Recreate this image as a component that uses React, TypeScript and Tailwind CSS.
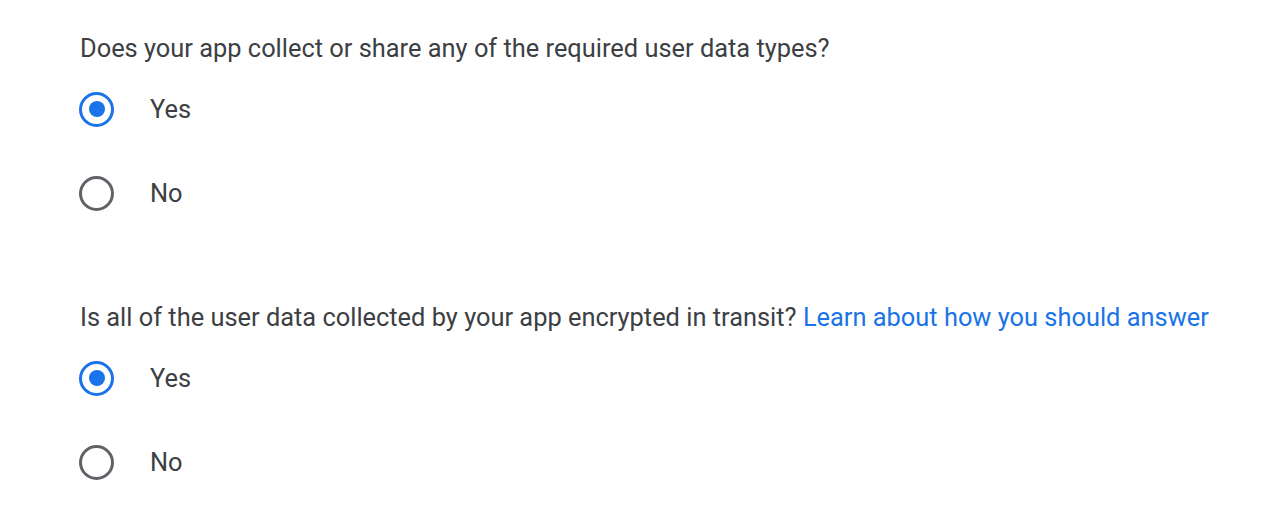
import { useState } from "react";

function Radio({ checked, label, onClick }: { checked: boolean; label: string; onClick: () => void }) {
  return (
    <button type="button" onClick={onClick} className="flex items-center h-12 text-left">
      <span
        className={`w-[35px] h-[35px] rounded-full border-[3.5px] flex items-center justify-center ml-[79px] ${
          checked ? "border-[#1a73e8]" : "border-[#5f6368]"
        }`}
      >
        {checked && <span className="w-4 h-4 rounded-full bg-[#1a73e8]" />}
      </span>
      <span className="ml-[36px] text-[25.4px] text-[#3c4043]">{label}</span>
    </button>
  );
}

function Question({ children, initial }: { children: React.ReactNode; initial: boolean }) {
  const [yes, setYes] = useState(initial);
  return (
    <div>
      <p className="pl-[80px] h-8 leading-8 text-[25.4px] text-[#3c4043]">{children}</p>
      <div className="mt-[21px] flex flex-col gap-9">
        <Radio checked={yes} label="Yes" onClick={() => setYes(true)} />
        <Radio checked={!yes} label="No" onClick={() => setYes(false)} />
      </div>
    </div>
  );
}

export default function App() {
  return (
    <div className="w-[1280px] h-[532px] bg-white pt-[32px] font-['Roboto',sans-serif] overflow-hidden">
      <Question initial={true}>Does your app collect or share any of the required user data types?</Question>
      <div className="mt-[84px]">
        <Question initial={true}>
          Is all of the user data collected by your app encrypted in transit?{" "}
          <a href="#" className="text-[#1a73e8]">Learn about how you should answer</a>
        </Question>
      </div>
    </div>
  );
}
